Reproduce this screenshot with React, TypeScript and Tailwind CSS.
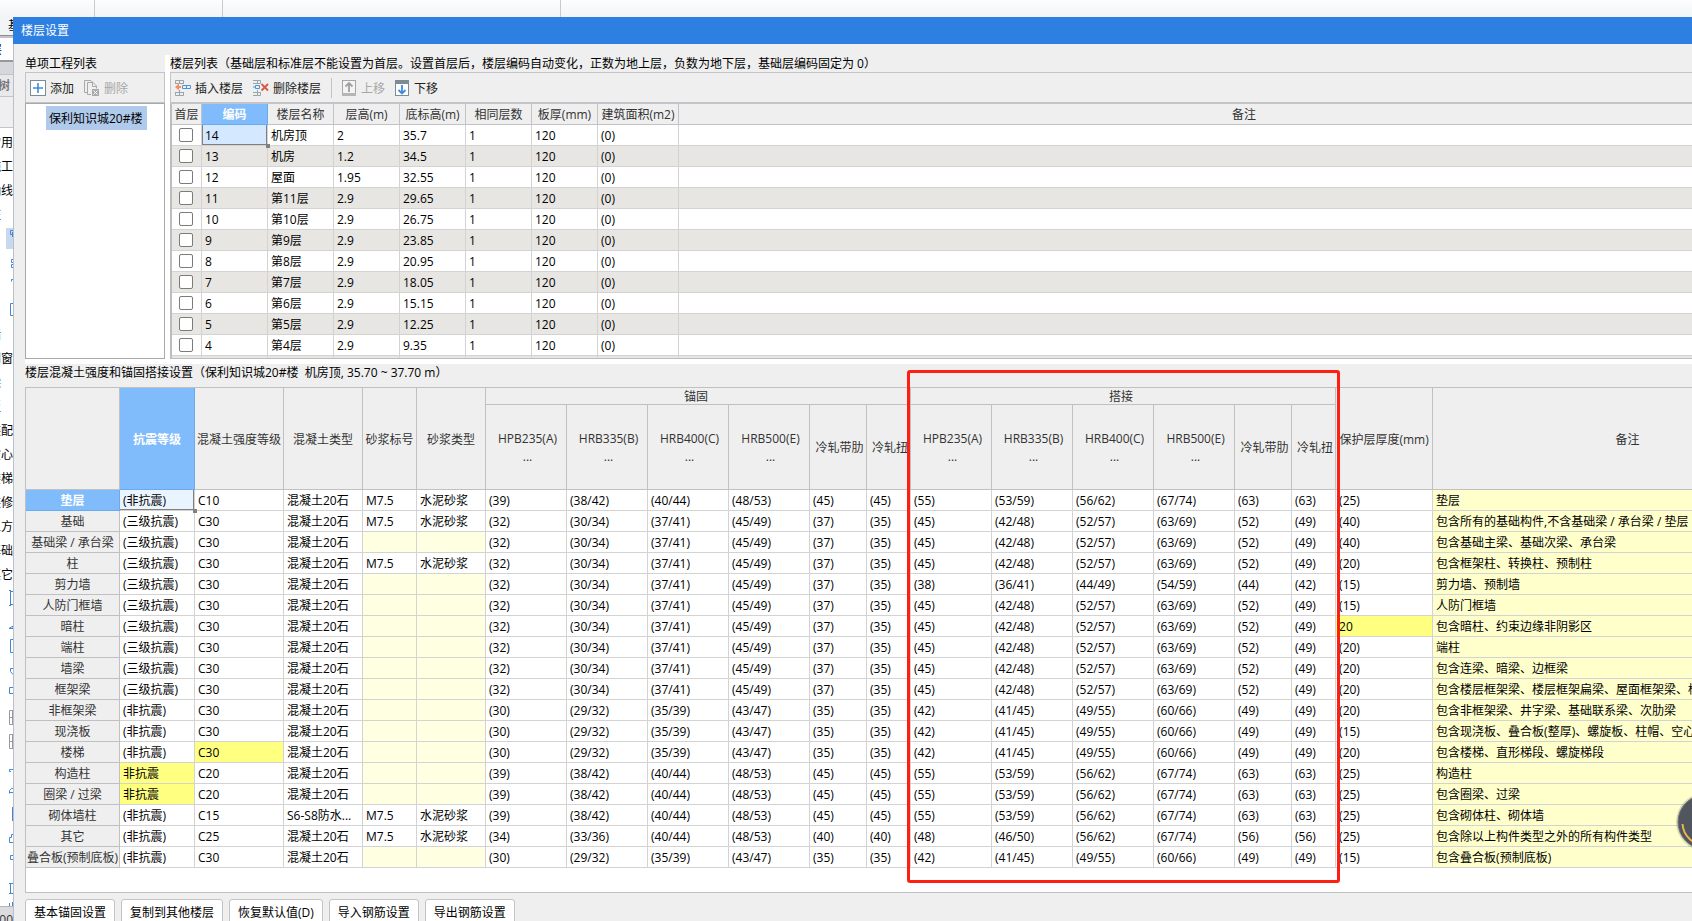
import { ReactNode } from "react";

const floors = [
  ["14", "机房顶", "2", "35.7"],
  ["13", "机房", "1.2", "34.5"],
  ["12", "屋面", "1.95", "32.55"],
  ["11", "第11层", "2.9", "29.65"],
  ["10", "第10层", "2.9", "26.75"],
  ["9", "第9层", "2.9", "23.85"],
  ["8", "第8层", "2.9", "20.95"],
  ["7", "第7层", "2.9", "18.05"],
  ["6", "第6层", "2.9", "15.15"],
  ["5", "第5层", "2.9", "12.25"],
  ["4", "第4层", "2.9", "9.35"],
];

const floorHeads = ["首层", "编码", "楼层名称", "层高(m)", "底标高(m)", "相同层数", "板厚(mm)", "建筑面积(m2)", "备注"];

// anchorage / lap lengths
const A39 = ["(39)", "(38/42)", "(40/44)", "(48/53)", "(45)", "(45)"];
const A32 = ["(32)", "(30/34)", "(37/41)", "(45/49)", "(37)", "(35)"];
const A30 = ["(30)", "(29/32)", "(35/39)", "(43/47)", "(35)", "(35)"];
const A34 = ["(34)", "(33/36)", "(40/44)", "(48/53)", "(40)", "(40)"];
const L55 = ["(55)", "(53/59)", "(56/62)", "(67/74)", "(63)", "(63)"];
const L45 = ["(45)", "(42/48)", "(52/57)", "(63/69)", "(52)", "(49)"];
const L38 = ["(38)", "(36/41)", "(44/49)", "(54/59)", "(44)", "(42)"];
const L42 = ["(42)", "(41/45)", "(49/55)", "(60/66)", "(49)", "(49)"];
const L48 = ["(48)", "(46/50)", "(56/62)", "(67/74)", "(56)", "(56)"];

type Member = {
  name: string;
  seismic: string;
  grade: string;
  type?: string;
  mortar?: boolean;
  anchor: string[];
  lap: string[];
  cover: string;
  note: string;
  changed?: string;
};

const members: Member[] = [
  { name: "垫层", seismic: "(非抗震)", grade: "C10", mortar: true, anchor: A39, lap: L55, cover: "(25)", note: "垫层" },
  { name: "基础", seismic: "(三级抗震)", grade: "C30", mortar: true, anchor: A32, lap: L45, cover: "(40)", note: "包含所有的基础构件,不含基础梁 / 承台梁 / 垫层" },
  { name: "基础梁 / 承台梁", seismic: "(三级抗震)", grade: "C30", anchor: A32, lap: L45, cover: "(40)", note: "包含基础主梁、基础次梁、承台梁" },
  { name: "柱", seismic: "(三级抗震)", grade: "C30", mortar: true, anchor: A32, lap: L45, cover: "(20)", note: "包含框架柱、转换柱、预制柱" },
  { name: "剪力墙", seismic: "(三级抗震)", grade: "C30", anchor: A32, lap: L38, cover: "(15)", note: "剪力墙、预制墙" },
  { name: "人防门框墙", seismic: "(三级抗震)", grade: "C30", anchor: A32, lap: L45, cover: "(15)", note: "人防门框墙" },
  { name: "暗柱", seismic: "(三级抗震)", grade: "C30", anchor: A32, lap: L45, cover: "20", note: "包含暗柱、约束边缘非阴影区", changed: "cover" },
  { name: "端柱", seismic: "(三级抗震)", grade: "C30", anchor: A32, lap: L45, cover: "(20)", note: "端柱" },
  { name: "墙梁", seismic: "(三级抗震)", grade: "C30", anchor: A32, lap: L45, cover: "(20)", note: "包含连梁、暗梁、边框梁" },
  { name: "框架梁", seismic: "(三级抗震)", grade: "C30", anchor: A32, lap: L45, cover: "(20)", note: "包含楼层框架梁、楼层框架扁梁、屋面框架梁、框支梁" },
  { name: "非框架梁", seismic: "(非抗震)", grade: "C30", anchor: A30, lap: L42, cover: "(20)", note: "包含非框架梁、井字梁、基础联系梁、次肋梁" },
  { name: "现浇板", seismic: "(非抗震)", grade: "C30", anchor: A30, lap: L42, cover: "(15)", note: "包含现浇板、叠合板(整厚)、螺旋板、柱帽、空心楼盖板" },
  { name: "楼梯", seismic: "(非抗震)", grade: "C30", anchor: A30, lap: L42, cover: "(20)", note: "包含楼梯、直形梯段、螺旋梯段", changed: "grade" },
  { name: "构造柱", seismic: "非抗震", grade: "C20", anchor: A39, lap: L55, cover: "(25)", note: "构造柱", changed: "seismic" },
  { name: "圈梁 / 过梁", seismic: "非抗震", grade: "C20", anchor: A39, lap: L55, cover: "(25)", note: "包含圈梁、过梁", changed: "seismic" },
  { name: "砌体墙柱", seismic: "(非抗震)", grade: "C15", type: "S6-S8防水...", mortar: true, anchor: A39, lap: L55, cover: "(25)", note: "包含砌体柱、砌体墙" },
  { name: "其它", seismic: "(非抗震)", grade: "C25", mortar: true, anchor: A34, lap: L48, cover: "(25)", note: "包含除以上构件类型之外的所有构件类型" },
  { name: "叠合板(预制底板)", seismic: "(非抗震)", grade: "C30", anchor: A30, lap: L42, cover: "(15)", note: "包含叠合板(预制底板)" },
];

const bars = ["HPB235(A)", "HRB335(B)", "HRB400(C)", "HRB500(E)", "冷轧带肋", "冷轧扭"];

// navigation tree, one row each: text, or the path of an icon
const tree: { text?: string; short?: boolean; d?: string; gray?: boolean; active?: boolean }[] = [
  { text: "常用" },
  { text: "施工" },
  { text: "轴线" },
  { text: "柱", short: true },
  { d: "M13 4.5h-2.5v4H13M12.5 6v5", active: true },
  { d: "M13 9.5h-1.5v3H13M13 14.5h-1.5v3H13" },
  { d: "M13 5.5h-1.5v2" },
  { d: "M13 5.5h-2.5v12H13" },
  { text: "墙", short: true },
  { text: "门窗" },
  { text: "梁", short: true },
  { text: "板", short: true },
  { text: "装配" },
  { text: "空心" },
  { text: "楼梯" },
  { text: "装修" },
  { text: "土方" },
  { text: "基础" },
  { text: "其它" },
  { d: "M9 4.5h2M10.5 4v15M9 19.5h2M11 5.5h2M11 18.5h2" },
  { d: "M9 18.5l3-2h1v2z" },
  { d: "M13 5.5h-2.5v13H13" },
  { d: "M13 10.5h-2.5v3l2.5 3" },
  { d: "M13 5.5H9.5v6H13" },
  { d: "M13 4.5H9.5v14H13M9.5 11.5H13M12.5 5v14", gray: true },
  { d: "M13 4.5H9.5v14H13M9.5 11.5H13M12.5 5v14", gray: true },
  { d: "M13 15.5H9.5v2H11" },
  { d: "M9.5 15.5v-3l2-2H13M9.5 14.5H13" },
  { d: "M12.5 5v14" },
  { d: "M13 8.5h-1.5v3h-2v5H13" },
  { d: "M13 5.5h-2.5v4H13" },
  { d: "M9 9.5h4M10.5 9v11M9 19.5h4" },
  { d: "M9.5 5v4M12.5 4v6" },
];

function Sidebar() {
  return (
    <aside className="w-[13px] shrink-0 overflow-hidden flex flex-col bg-white text-black whitespace-nowrap">
      <div className="h-[18px] shrink-0 bg-[#f1f5f6] pl-2 leading-[18px]">基</div>
      <div className="h-[3px] shrink-0 bg-[#c3c3c7] border-t border-[#8f8f93]"></div>
      <div className="h-[22px] shrink-0 flex justify-end pr-[11px] leading-[24px]">层</div>
      <div className="h-[14px] shrink-0 bg-[#d6d7dd] border-t-2 border-[#97979c]"></div>
      <div className="h-[23px] shrink-0 flex justify-end pr-[3px] bg-[#e9e9eb] border-y border-[#c4c4c8] text-[#777] font-bold leading-[22px]">树</div>
      <div className="h-[31px] shrink-0 bg-[#efefef] border-b border-[#c4c4c8] mb-[2px]"></div>
      <nav className="flex-1 min-h-0 overflow-hidden">
        {tree.map((item, i) => (
          <div key={i} className="h-6 flex items-center justify-end">
            {item.text ? (
              <span className={item.short ? "pt-[2px] pr-3" : "pt-[2px]"}>{item.text}</span>
            ) : (
              <svg width="13" height="24" viewBox="0 0 13 24" fill="none" stroke={item.gray ? "#9a9a9a" : "#3f87d9"} className="shrink-0">
                {item.active && <rect x="6" y="2" width="7" height="21" fill="#c8d8ef" stroke="none" />}
                <path d={item.d} />
              </svg>
            )}
          </div>
        ))}
      </nav>
      <div className="h-[15px] shrink-0 flex justify-end bg-[#dcdce0] border-t border-[#b5b5b9] leading-[26px] text-[#333]">00</div>
    </aside>
  );
}

function ToolButton({ icon, label, disabled }: { icon: ReactNode; label: string; disabled?: boolean }) {
  return (
    <button type="button" disabled={disabled} className="flex items-center gap-1 h-6 text-[#222] disabled:text-[#a8a8a8]">
      {icon}
      <span className="pt-[2px]">{label}</span>
    </button>
  );
}

const AddIcon = () => (
  <svg width="16" height="16" viewBox="0 0 16 16" fill="none">
    <rect x="0.5" y="0.5" width="15" height="15" fill="#fff" stroke="#7d8c93" />
    <path d="M3 8h10M8 3v10" stroke="#3d8be0" strokeWidth="1.6" />
  </svg>
);

const CopyDeleteIcon = () => (
  <svg width="16" height="16" viewBox="0 0 16 16" fill="none" stroke="#a9a9a9">
    <path d="M3 12.5H0.5V0.5H7L9 2.5" />
    <path d="M7 14.5H3.5V2.5H9L12.5 6V8.5M8.5 3V6.5H12" />
    <rect x="8" y="9" width="7" height="7" fill="#a9a9a9" stroke="none" />
    <path d="M9.5 10.5l4 4M13.5 10.5l-4 4" stroke="#fff" />
  </svg>
);

const InsertIcon = () => (
  <svg width="16" height="16" viewBox="0 0 16 16" fill="none">
    <path d="M0.5 4V0.5H8.5V4M4.5 0.5V4M0.5 3.5H8.5M0.5 12V15.5H8.5V12M0.5 12.5H8.5M4.5 10V15" stroke="#9aa5aa" />
    <path d="M7.5 5.5H15.5V8.5H7.5zM11.5 5.5V8.5" stroke="#4b93df" />
    <path d="M0 7l4-3.5V6H6V8H4v2.5z" fill="#ff8a5c" />
  </svg>
);

const DeleteRowIcon = () => (
  <svg width="16" height="16" viewBox="0 0 16 16" fill="none">
    <path d="M0 0.5H7.5V3.5H0M4.5 0V4M0 12.5H7.5V15.5H0M4.5 10V16" stroke="#9aa5aa" />
    <path d="M2.5 5.5H6.5V8.5H2.5zM0 7H2" stroke="#4b93df" />
    <path d="M8.5 4l6.5 6.5M15 4l-6.5 6.5" stroke="#d9593f" strokeWidth="1.8" />
  </svg>
);

const UpIcon = () => (
  <svg width="15" height="16" viewBox="0 0 15 16" fill="none">
    <rect x="0.5" y="0.5" width="13" height="15" fill="#f4f4f4" stroke="#a5a5a5" />
    <rect x="0" y="13" width="14" height="3" fill="#b5b5b5" />
    <path d="M7 12V3M3.5 6.5L7 3l3.5 3.5" stroke="#a0a0a0" strokeWidth="1.8" />
  </svg>
);

const DownIcon = () => (
  <svg width="15" height="16" viewBox="0 0 15 16" fill="none">
    <rect x="0.5" y="0.5" width="13" height="15" fill="#fff" stroke="#7d8c93" />
    <rect x="0" y="0" width="14" height="4" fill="#7d8c93" />
    <path d="M7 5v9M3.5 10L7 13.5 10.5 10" stroke="#3d8be0" strokeWidth="1.8" />
  </svg>
);

function FillHandle() {
  return <span className="absolute -right-[3px] -bottom-[3px] z-10 size-1 bg-[#808080]"></span>;
}

function FloorTable() {
  return (
    <table className="w-full table-fixed border-separate border-spacing-0 whitespace-nowrap">
      <colgroup>
        <col className="w-[30px]" />
        <col className="w-[66px]" />
        <col className="w-[66px]" />
        <col className="w-[66px]" />
        <col className="w-[66px]" />
        <col className="w-[66px]" />
        <col className="w-[66px]" />
        <col className="w-[81px]" />
        <col />
      </colgroup>
      <thead>
        <tr className="h-[21px]">
          {floorHeads.map((h) => (
            <th
              key={h}
              className={`p-0 pt-[2px] border-r border-b ${
                h === "编码" ? "bg-[#80bbfb] border-[#6aaaf0] text-white font-bold" : "bg-[#efefef] border-[#c3c3c6] text-[#333] font-normal"
              }`}
            >
              {h}
            </th>
          ))}
        </tr>
      </thead>
      <tbody className="[&_td]:border-r [&_td]:border-b [&_td]:border-[#d3d3d3] [&_td]:pt-[2px] [&_td]:pb-0 [&_td]:pr-0 [&_td]:pl-[3px]">
        {floors.map(([code, name, height, base], i) => (
          <tr key={code} className={i % 2 ? "h-[21px] bg-[#e8e6e3]" : "h-[21px] bg-white"}>
            <td className="pt-0!">
              <input
                type="checkbox"
                aria-label={`首层 ${name}`}
                className="block ml-1 size-[14px] appearance-none rounded-[2px] border border-[#7b7b7b] bg-white"
              />
            </td>
            {i === 0 ? (
              <td className="relative bg-[#d4e8ff] shadow-[inset_1px_0_0_#808080,inset_-1px_-1px_0_#808080]">
                {code}
                <FillHandle />
              </td>
            ) : (
              <td>{code}</td>
            )}
            <td>{name}</td>
            <td>{height}</td>
            <td>{base}</td>
            <td>1</td>
            <td>120</td>
            <td>(0)</td>
            <td></td>
          </tr>
        ))}
        <tr className="h-[21px] bg-[#e8e6e3]">
          {floorHeads.map((h) => (
            <td key={h}></td>
          ))}
        </tr>
      </tbody>
    </table>
  );
}

function BarHeads() {
  return (
    <>
      {bars.map((b, i) => (
        <th key={b} className="pl-[3px]">
          {b}
          {i < 4 && <div>...</div>}
        </th>
      ))}
    </>
  );
}

function MemberTable() {
  const yellow = "bg-[#ffff80]";
  return (
    <table className="w-full table-fixed border-separate border-spacing-0 whitespace-nowrap">
      <colgroup>
        <col className="w-[94px]" />
        <col className="w-[75px]" />
        <col className="w-[89px]" />
        <col className="w-[79px]" />
        <col className="w-[54px]" />
        <col className="w-[69px]" />
        <col className="w-[81px]" />
        <col className="w-[81px]" />
        <col className="w-[81px]" />
        <col className="w-[81px]" />
        <col className="w-[57px]" />
        <col className="w-[44px]" />
        <col className="w-[81px]" />
        <col className="w-[81px]" />
        <col className="w-[81px]" />
        <col className="w-[81px]" />
        <col className="w-[57px]" />
        <col className="w-[44px]" />
        <col className="w-[97px]" />
        <col />
      </colgroup>
      <thead className="text-[#333] [&_th]:font-normal [&_th]:border-r [&_th]:border-b [&_th]:border-[#c0c0c0] [&_th]:bg-[#efefef] [&_th]:pt-[2px] [&_th]:pb-0 [&_th]:pr-0">
        <tr className="h-[17px] leading-[14px]">
          <th rowSpan={2}></th>
          <th rowSpan={2} className="bg-[#80bbfb]! border-[#6aaaf0]! text-white font-bold!">抗震等级</th>
          <th rowSpan={2}>混凝土强度等级</th>
          <th rowSpan={2}>混凝土类型</th>
          <th rowSpan={2}>砂浆标号</th>
          <th rowSpan={2}>砂浆类型</th>
          <th colSpan={6} className="pr-1!">锚固</th>
          <th colSpan={6} className="pr-1!">搭接</th>
          <th rowSpan={2}>保护层厚度(mm)</th>
          <th rowSpan={2}>备注</th>
        </tr>
        <tr className="h-[85px] leading-[18px]">
          <BarHeads />
          <BarHeads />
        </tr>
      </thead>
      <tbody className="[&_td]:border-r [&_td]:border-b [&_td]:border-[#d3d3d3] [&_td]:pt-[2px] [&_td]:pb-0 [&_td]:pr-0 [&_td]:pl-[3px]">
        {members.map((m, i) => (
          <tr key={m.name} className="h-[21px]">
            <th
              scope="row"
              className={`p-0 pt-[2px] border-r border-b ${
                i === 0 ? "bg-[#80bbfb] border-[#6aaaf0] text-white font-bold" : "bg-[#efefef] border-[#c0c0c0] text-[#333] font-normal"
              }`}
            >
              {m.name}
            </th>
            {i === 0 ? (
              <td className="relative bg-[#eaf4ff] shadow-[inset_-1px_-1px_0_#808080]">
                {m.seismic}
                <FillHandle />
              </td>
            ) : (
              <td className={m.changed === "seismic" ? yellow : ""}>{m.seismic}</td>
            )}
            <td className={m.changed === "grade" ? yellow : ""}>{m.grade}</td>
            <td>{m.type ?? "混凝土20石"}</td>
            <td className={m.mortar ? "" : "bg-[#ffffe1]"}>{m.mortar && "M7.5"}</td>
            <td className={m.mortar ? "" : "bg-[#ffffe1]"}>{m.mortar && "水泥砂浆"}</td>
            {[...m.anchor, ...m.lap].map((v, k) => (
              <td key={k}>{v}</td>
            ))}
            <td className={m.changed === "cover" ? yellow : ""}>{m.cover}</td>
            <td className="bg-[#ffffcc]">{m.note}</td>
          </tr>
        ))}
      </tbody>
    </table>
  );
}

export default function App() {
  return (
    <div className="relative h-screen overflow-hidden flex flex-col bg-white font-['Open_Sans','Noto_Sans_CJK_SC',sans-serif] text-[12px] leading-[18px] text-black">
      <div className="h-[17px] shrink-0 flex bg-linear-to-b from-[#fcfdfd] to-[#f1f5f6]">
        <div className="w-[95px] border-r border-[#c8cacc]"></div>
        <div className="w-[128px] border-r border-[#c8cacc]"></div>
        <div className="w-[338px] border-r border-[#c8cacc]"></div>
      </div>

      <div className="flex-1 min-h-0 flex">
        <Sidebar />

        {/* the dialog runs past the right edge of the window */}
        <main className="flex-1 min-w-0 -mr-36 flex flex-col bg-[#efefef]">
          <h1 className="h-[27px] shrink-0 bg-[#2d80e2] pl-2 text-white leading-[27px]">楼层设置</h1>

          <div className="flex-1 border-l border-[#b9c0ca] pl-[11px] pr-3">
            <div className="flex">
              <section className="w-[140px] shrink-0 flex flex-col">
                <h2 className="h-[28px] pt-[11px] leading-[17px]">单项工程列表</h2>
                <div className="h-[31px] flex items-center gap-[10px] pl-1 border border-[#c3c3c8]">
                  <ToolButton icon={<AddIcon />} label="添加" />
                  <ToolButton icon={<CopyDeleteIcon />} label="删除" disabled />
                </div>
                <ul className="flex-1 bg-white border border-[#a9a9ac] pt-[2px] pl-5">
                  <li className="w-[101px] h-6 pt-1 pl-[3px] bg-[#b0caec]">保利知识城20#楼</li>
                </ul>
              </section>

              <div className="w-[5px] shrink-0 mt-[11px] bg-white"></div>

              <section className="flex-1 min-w-0">
                <h2 className="h-[28px] pt-[11px] leading-[17px]">楼层列表（基础层和标准层不能设置为首层。设置首层后，楼层编码自动变化，正数为地上层，负数为地下层，基础层编码固定为 0）</h2>
                <div className="h-[32px] flex items-center gap-[10px] pl-1 border-l border-t border-b-2 border-[#c3c3c8]">
                  <ToolButton icon={<InsertIcon />} label="插入楼层" />
                  <ToolButton icon={<DeleteRowIcon />} label="删除楼层" />
                  <div className="w-px h-5 bg-[#c3c3c8]"></div>
                  <ToolButton icon={<UpIcon />} label="上移" disabled />
                  <ToolButton icon={<DownIcon />} label="下移" />
                </div>
                <div className="h-[255px] overflow-hidden border-l-2 border-b border-[#bdbdc0] pr-[14px] bg-white">
                  <FloorTable />
                </div>
              </section>
            </div>

            <div className="h-[5px] bg-white"></div>

            <h2 className="h-[23px] whitespace-pre">楼层混凝土强度和锚固搭接设置（保利知识城20#楼  机房顶, 35.70 ~ 37.70 m）</h2>
            <div className="relative bg-white border border-[#c0c0c0] pb-6">
              <MemberTable />
              <div className="absolute left-[881px] -top-[18px] w-[433px] h-[513px] z-20 border-[3px] border-[#ff1f10] rounded-[3px] pointer-events-none"></div>
            </div>

            <div className="flex gap-[6px] mt-[6px] [&_button]:h-[27px] [&_button]:px-2 [&_button]:bg-white [&_button]:border [&_button]:border-[#c4c4c4] [&_button]:rounded-[3px]">
              <button type="button">基本锚固设置</button>
              <button type="button">复制到其他楼层</button>
              <button type="button">恢复默认值(D)</button>
              <button type="button">导入钢筋设置</button>
              <button type="button">导出钢筋设置</button>
            </div>
          </div>
        </main>
      </div>

      {/* floating helper ball */}
      <svg width="60" height="60" viewBox="0 0 60 60" fill="none" className="absolute -right-[43px] bottom-[69px] z-30">
        <circle cx="30" cy="30" r="29" fill="#000" opacity="0.15" />
        <circle cx="30" cy="30" r="27" fill="#50555e" stroke="#6d727b" />
        <path d="M7.5 32a22.5 22.5 0 0 0 22.5 21" stroke="#e8b54a" strokeWidth="2" />
      </svg>
    </div>
  );
}
